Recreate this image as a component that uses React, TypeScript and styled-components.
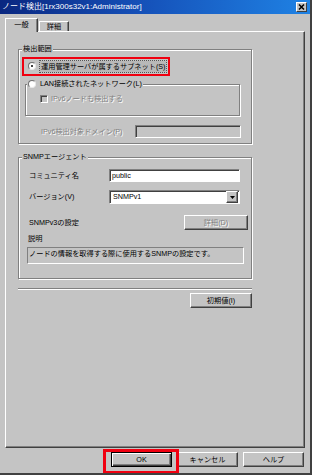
import React from 'react';
import styled, { createGlobalStyle, css } from 'styled-components';

const BG = '#c4c4c4';

const Global = createGlobalStyle`
  html, body { margin: 0; padding: 0; background: ${BG}; }
  body {
    font-family: "Liberation Sans", "Noto Sans CJK JP", sans-serif;
    font-size: 7.2px;
    color: #000;
  }
`;

const Window = styled.div`
  position: relative;
  box-sizing: border-box;
  width: 312px;
  height: 475px;
  background: ${BG};
  border-right: 2px solid #404040;
  border-bottom: 2px solid #404040;
  display: flex;
  flex-direction: column;
  overflow: hidden;
`;

const TitleBar = styled.div`
  height: 14px;
  flex: none;
  display: flex;
  align-items: center;
  justify-content: space-between;
  padding: 0 3px 0 2px;
  background: linear-gradient(90deg, #0a2780 0%, #1550b8 45%, #1f82e4 100%);
`;

const Title = styled.span`
  color: #fff;
  font-size: 8px;
  line-height: 14px;
  white-space: nowrap;
`;

const CloseBtn = styled.div`
  box-sizing: border-box;
  width: 11px;
  height: 10px;
  background: ${BG};
  border: 1px solid;
  border-color: #fff #404040 #404040 #fff;
  display: flex;
  align-items: center;
  justify-content: center;
`;

const Body = styled.div`
  display: flex;
  flex-direction: column;
  padding: 4px 0 0 5px;
`;

const TabStrip = styled.div`
  display: flex;
  align-items: flex-end;
  height: 13px;
  position: relative;
  z-index: 1;
`;

const Tab = styled.div<{ $active?: boolean; $w: number }>`
  box-sizing: border-box;
  width: ${(p) => p.$w}px;
  height: ${(p) => (p.$active ? 14 : 10)}px;
  margin-bottom: ${(p) => (p.$active ? -1 : 0)}px;
  margin-left: ${(p) => (p.$active ? 0 : 1)}px;
  background: ${BG};
  border-top: 1px solid #fff;
  border-left: 1px solid #fff;
  border-right: 1px solid #404040;
  box-shadow: inset -1px 0 0 #808080;
  display: flex;
  align-items: center;
  justify-content: center;
  line-height: 10px;
  ${(p) =>
    p.$active &&
    css`
      padding-bottom: 2px;
    `}
`;

const TabPanel = styled.div`
  box-sizing: border-box;
  width: 300px;
  height: 417px;
  border-top: 1px solid #fff;
  border-left: 1px solid #fff;
  border-right: 1px solid #404040;
  border-bottom: 1px solid #404040;
  box-shadow: inset -1px -1px 0 #808080;
  padding-left: 12px;
  display: flex;
  flex-direction: column;
`;

const Column = styled.div`
  width: 234px;
  display: flex;
  flex-direction: column;
`;

const Group = styled.div<{ $w: number; $mt: number; $pb: number; $ml?: number }>`
  position: relative;
  box-sizing: border-box;
  width: ${(p) => p.$w}px;
  margin-top: ${(p) => p.$mt}px;
  margin-left: ${(p) => p.$ml ?? 0}px;
  padding-bottom: ${(p) => p.$pb}px;
  border: 1px solid #808080;
  box-shadow: inset 1px 1px 0 #fff, 1px 1px 0 #fff;
  display: flex;
  flex-direction: column;
`;

const Caption = styled.div<{ $left: number; $top: number }>`
  position: absolute;
  left: ${(p) => p.$left}px;
  top: ${(p) => p.$top}px;
  padding: 0 1px;
  background: ${BG};
  height: 12px;
  line-height: 12px;
  display: flex;
  align-items: center;
  gap: 4px;
  white-space: nowrap;
`;

const Row = styled.div<{ $mt: number; $ml: number; $h: number; $gap?: number }>`
  display: flex;
  align-items: center;
  margin-top: ${(p) => p.$mt}px;
  margin-left: ${(p) => p.$ml}px;
  height: ${(p) => p.$h}px;
  gap: ${(p) => p.$gap ?? 0}px;
  white-space: nowrap;
`;

const Label = styled.span<{ $w?: number; $disabled?: boolean }>`
  display: inline-block;
  width: ${(p) => (p.$w ? `${p.$w}px` : 'auto')};
  flex: none;
  line-height: 10px;
  white-space: nowrap;
  ${(p) =>
    p.$disabled &&
    css`
      color: #808080;
      text-shadow: 1px 1px 0 #fff;
    `}
`;

const Focus = styled.span`
  line-height: 10px;
  padding: 1px 0 0 1px;
  outline: 1px dotted #555;
  background: #b8b8b8;
`;

const Radio = styled.span<{ $checked?: boolean }>`
  box-sizing: border-box;
  flex: none;
  width: 8px;
  height: 8px;
  border-radius: 50%;
  background: #fff;
  border: 1px solid;
  border-color: #707070 #e8e8e8 #e8e8e8 #707070;
  display: flex;
  align-items: center;
  justify-content: center;
  &::after {
    content: '';
    width: 2px;
    height: 2px;
    border-radius: 1px;
    background: ${(p) => (p.$checked ? '#000' : 'transparent')};
  }
`;

const Check = styled.span`
  box-sizing: border-box;
  flex: none;
  width: 8px;
  height: 8px;
  background: ${BG};
  border: 1px solid;
  border-color: #808080 #fff #fff #808080;
  box-shadow: inset 1px 1px 0 #404040;
`;

const Field = styled.div<{ $w: number; $h: number; $disabled?: boolean }>`
  box-sizing: border-box;
  flex: none;
  width: ${(p) => p.$w}px;
  height: ${(p) => p.$h}px;
  background: ${(p) => (p.$disabled ? BG : '#fff')};
  border: 1px solid;
  border-color: #808080 #fff #fff #808080;
  box-shadow: inset 1px 1px 0 #404040;
  display: flex;
  align-items: center;
  padding-left: 2px;
  line-height: 10px;
`;

const ComboText = styled.span`
  flex: 1;
  line-height: 10px;
  padding-left: 1px;
`;

const DropBtn = styled.div`
  box-sizing: border-box;
  width: 12px;
  height: 12px;
  align-self: flex-end;
  background: ${BG};
  border: 1px solid;
  border-color: #fff #404040 #404040 #fff;
  box-shadow: inset -1px -1px 0 #808080;
  display: flex;
  align-items: center;
  justify-content: center;
`;

const DescBox = styled.div`
  box-sizing: border-box;
  width: 217px;
  height: 17px;
  margin: 3px 0 0 8px;
  border: 1px solid;
  border-color: #808080 #fff #fff #808080;
  padding: 1px 0 0 1px;
  line-height: 10px;
  white-space: nowrap;
`;

const Separator = styled.div`
  width: 234px;
  height: 1px;
  margin-top: 9px;
  background: #808080;
  border-bottom: 1px solid #fff;
`;

const Btn = styled.div<{ $w: number; $def?: boolean; $disabled?: boolean }>`
  box-sizing: border-box;
  flex: none;
  width: ${(p) => p.$w}px;
  height: 15px;
  background: ${BG};
  display: flex;
  align-items: center;
  justify-content: center;
  line-height: 10px;
  white-space: nowrap;
  ${(p) =>
    p.$def
      ? css`
          border: 1px solid #000;
          box-shadow: inset 1px 1px 0 #fff, inset -1px -1px 0 #404040,
            inset -2px -2px 0 #808080;
        `
      : css`
          border: 1px solid;
          border-color: #fff #404040 #404040 #fff;
          box-shadow: inset -1px -1px 0 #808080;
        `}
  ${(p) =>
    p.$disabled &&
    css`
      color: #808080;
      text-shadow: 1px 1px 0 #fff;
    `}
`;

const ResetBtn = styled(Btn)`
  align-self: flex-end;
  margin-top: 3px;
`;

const V3Btn = styled(Btn)`
  margin-left: 75px;
`;

const ButtonRow = styled.div`
  width: 300px;
  display: flex;
  justify-content: flex-end;
  gap: 5px;
  margin-top: 4px;
  padding-right: 1px;
  box-sizing: border-box;
`;

const RedBox = styled.div<{ $x: number; $y: number; $w: number; $h: number; $t: number }>`
  position: absolute;
  left: ${(p) => p.$x}px;
  top: ${(p) => p.$y}px;
  width: ${(p) => p.$w}px;
  height: ${(p) => p.$h}px;
  box-sizing: border-box;
  border: ${(p) => p.$t}px solid #f00010;
  pointer-events: none;
`;

export default function App() {
  return (
    <>
      <Global />
      <Window>
        <TitleBar>
          <Title>ノード検出[1rx300s32v1:Administrator]</Title>
          <CloseBtn>
            <svg width="7" height="6" viewBox="0 0 7 6">
              <path d="M1 0.5 L6 5.5 M6 0.5 L1 5.5" stroke="#000" strokeWidth="1.5" />
            </svg>
          </CloseBtn>
        </TitleBar>
        <Body>
          <TabStrip>
            <Tab $active $w={33}>一般</Tab>
            <Tab $w={30}>詳細</Tab>
          </TabStrip>
          <TabPanel>
            <Column>
              <Group $w={234} $mt={17} $pb={5}>
                <Caption $left={3} $top={-7}>検出範囲</Caption>
                <Row $mt={9} $ml={9} $h={14} $gap={4}>
                  <Radio $checked />
                  <Focus>運用管理サーバが属するサブネット(S)</Focus>
                </Row>
                <Group $w={215} $mt={11} $ml={6} $pb={10}>
                  <Caption $left={1} $top={-7}>
                    <Radio />
                    <Label>LAN接続されたネットワーク(L)</Label>
                  </Caption>
                  <Row $mt={8} $ml={14} $h={12} $gap={3}>
                    <Check />
                    <Label $disabled>IPv6ノードも検出する</Label>
                  </Row>
                </Group>
                <Row $mt={9} $ml={22} $h={13}>
                  <Label $w={94} $disabled>IPv6検出対象ドメイン(P)</Label>
                  <Field $w={106} $h={13} $disabled />
                </Row>
              </Group>

              <Group $w={234} $mt={13} $pb={14}>
                <Caption $left={3} $top={-7}>SNMPエージェント</Caption>
                <Row $mt={11} $ml={10} $h={13}>
                  <Label $w={80}>コミュニティ名</Label>
                  <Field $w={131} $h={13}>public</Field>
                </Row>
                <Row $mt={8} $ml={10} $h={14}>
                  <Label $w={80}>バージョン(V)</Label>
                  <Field $w={131} $h={14} style={{ paddingRight: 1 }}>
                    <ComboText>SNMPv1</ComboText>
                    <DropBtn>
                      <svg width="5" height="3" viewBox="0 0 5 3">
                        <path d="M0 0 H5 L2.5 3 Z" fill="#000" />
                      </svg>
                    </DropBtn>
                  </Field>
                </Row>
                <Row $mt={11} $ml={10} $h={15}>
                  <Label $w={80}>SNMPv3の設定</Label>
                  <V3Btn $w={64} $disabled>詳細(D)</V3Btn>
                </Row>
                <Row $mt={4} $ml={9} $h={10}>
                  <Label>説明</Label>
                </Row>
                <DescBox>ノードの情報を取得する際に使用するSNMPの設定です。</DescBox>
              </Group>

              <Separator />
              <ResetBtn $w={62}>初期値(I)</ResetBtn>
            </Column>
          </TabPanel>
          <ButtonRow>
            <Btn $w={61} $def>OK</Btn>
            <Btn $w={61}>キャンセル</Btn>
            <Btn $w={61}>ヘルプ</Btn>
          </ButtonRow>
        </Body>
        <RedBox $x={22} $y={57} $w={148} $h={19} $t={2} />
        <RedBox $x={103} $y={449} $w={76} $h={25} $t={3} />
      </Window>
    </>
  );
}
